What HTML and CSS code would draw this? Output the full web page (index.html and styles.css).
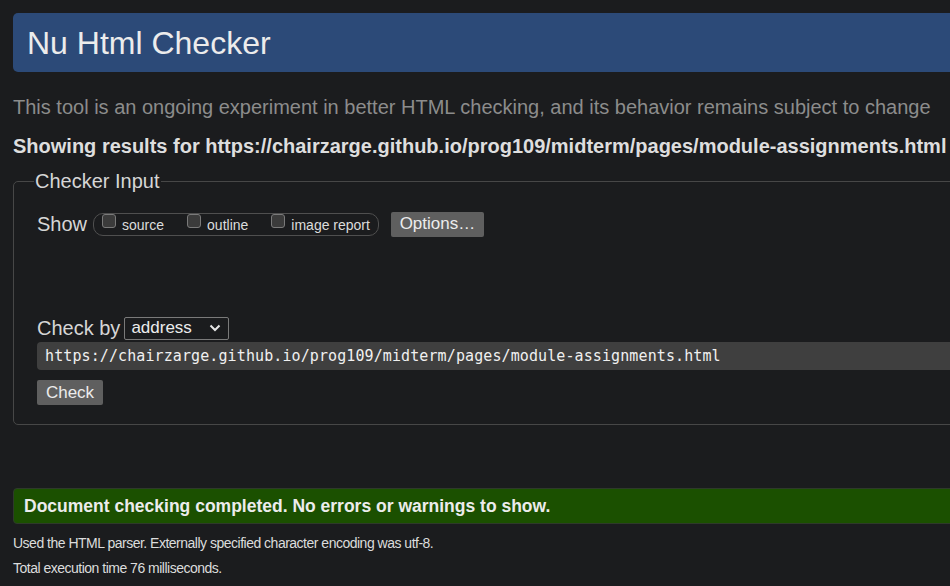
FILE: index.html
```html
<!DOCTYPE html>
<html lang="en">
<head>
<meta charset="utf-8">
<title>Nu Html Checker</title>
<link rel="stylesheet" href="styles.css">
</head>
<body>
<div class="page">
  <h1 class="banner">Nu Html Checker</h1>
  <p class="intro">This tool is an ongoing experiment in better HTML checking, and its behavior remains subject to change</p>
  <p class="showing">Showing results for https://chairzarge.github.io/prog109/midterm/pages/module-assignments.html</p>
  <fieldset class="input">
    <legend>Checker Input</legend>
    <div class="show-row">
      <span class="label">Show</span>
      <span class="group">
        <label class="opt"><span class="box"></span>source</label>
        <label class="opt"><span class="box"></span>outline</label>
        <label class="opt"><span class="box"></span>image report</label>
      </span>
      <button class="btn options">Options…</button>
    </div>
    <div class="check-row">
      <span class="label">Check by</span>
      <span class="select">address<svg class="chev" width="12" height="8" viewBox="0 0 12 8"><path d="M1.5 1.5 L6 6 L10.5 1.5" fill="none" stroke="#e6e6e6" stroke-width="2"/></svg></span>
    </div>
    <div class="url">https://chairzarge.github.io/prog109/midterm/pages/module-assignments.html</div>
    <button class="btn check">Check</button>
  </fieldset>
  <div class="success">Document checking completed. No errors or warnings to show.</div>
  <p class="meta">Used the HTML parser. Externally specified character encoding was utf-8.</p>
  <p class="meta">Total execution time 76 milliseconds.</p>
</div>
</body>
</html>
```
FILE: styles.css
```css
html, body {
  margin: 0;
  padding: 0;
  background: #1b1c1e;
  overflow: hidden;
  height: 586px;
}
body {
  font-family: "Liberation Sans", Arial, sans-serif;
  color: #dcdcdc;
}
.page {
  width: 1000px;
  padding: 13px 0 0 13px;
}
.banner {
  margin: 0;
  height: 59px;
  box-sizing: border-box;
  background: #2c4a78;
  border-radius: 5px 0 0 5px;
  color: #ececec;
  font-weight: normal;
  font-size: 32px;
  line-height: 60px;
  padding-left: 14px;
}
.intro {
  margin: 23px 0 0 0;
  font-size: 20px;
  line-height: 24px;
  color: #8c8c8c;
  white-space: nowrap;
}
.showing {
  margin: 16px 0 0 0;
  font-size: 20px;
  line-height: 22px;
  font-weight: bold;
  color: #dedede;
  white-space: nowrap;
}
.input {
  margin: 14px 0 0 0;
  border: 1px solid #474747;
  border-radius: 5px;
  padding: 0 0 19px 23px;
}
.input legend {
  font-size: 20px;
  color: #d6d6d6;
  padding: 0 1px;
  margin-left: -3px;
  line-height: 20px;
}
.show-row {
  display: flex;
  align-items: center;
  margin-top: 20px;
  height: 26px;
}
.label {
  font-size: 20px;
  color: #d6d6d6;
}
.group {
  display: flex;
  align-items: center;
  margin-left: 6px;
  height: 23px;
  box-sizing: border-box;
  border: 1px solid #4f4f4f;
  border-radius: 10px;
  padding: 0 8px 0 8px;
  gap: 23px;
}
.opt {
  display: flex;
  align-items: center;
  font-size: 14px;
  color: #dcdcdc;
  gap: 6px;
  position: relative;
  top: 1px;
}
.box {
  width: 14px;
  height: 14px;
  box-sizing: border-box;
  border: 1px solid #7a7a7a;
  border-radius: 3px;
  background: #3b3b3b;
  position: relative;
  top: -4px;
}
.btn {
  font-family: "Liberation Sans", Arial, sans-serif;
  background: #5f5f5f;
  color: #ececec;
  border: none;
  border-radius: 2px;
  font-size: 17px;
  padding: 0;
}
.options {
  margin-left: 12px;
  width: 93px;
  height: 25px;
}
.check-row {
  display: flex;
  align-items: center;
  margin-top: 79px;
  height: 24px;
}
.select {
  display: flex;
  align-items: center;
  justify-content: space-between;
  margin-left: 4px;
  width: 105px;
  height: 23px;
  box-sizing: border-box;
  border: 1px solid #7a7a7a;
  border-radius: 2px;
  padding: 0 7px 0 6px;
  font-size: 17px;
  color: #ececec;
}
.url {
  margin-top: 2px;
  height: 28px;
  line-height: 28px;
  background: #3f3f3f;
  border-radius: 4px 0 0 4px;
  padding-left: 8px;
  font-family: "DejaVu Sans Mono", "Liberation Mono", monospace;
  font-size: 15px;
  letter-spacing: 0.1px;
  color: #f0f0f0;
}
.check {
  display: block;
  margin-top: 10px;
  width: 66px;
  height: 25px;
}
.success {
  margin-top: 63px;
  height: 36px;
  box-sizing: border-box;
  background: #1b5000;
  border: 1px solid #2e3a2a;
  border-radius: 4px 0 0 4px;
  padding-left: 10px;
  line-height: 34px;
  font-size: 17.5px;
  font-weight: bold;
  color: #ececec;
}
.meta {
  margin: 0;
  font-size: 14px;
  letter-spacing: -0.5px;
  line-height: 25px;
  color: #dcdcdc;
}
.success + .meta { margin-top: 7px; }
```
